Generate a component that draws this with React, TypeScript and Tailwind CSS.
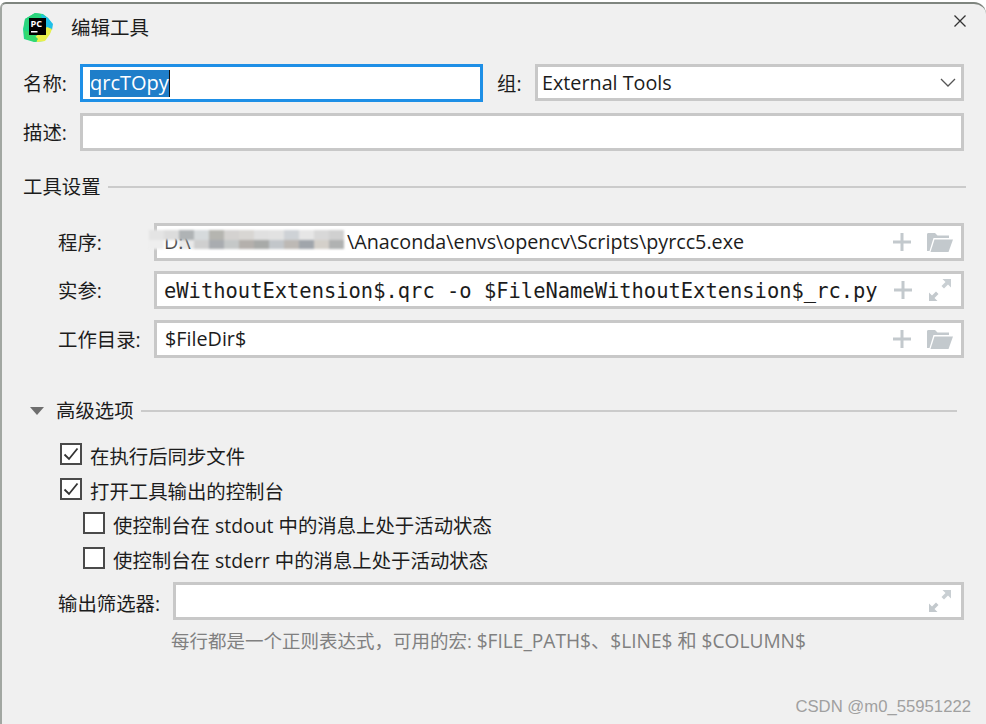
import React from "react";

const ui = "font-['Open_Sans','Noto_Sans_CJK_SC',sans-serif]";
const box = "flex items-center border-[3px] border-[#c8c8c8] bg-white";
const labelText = "text-[19.4px] leading-[26px] text-[#1c1c1c]";

function Plus() {
  return (
    <svg width="18" height="18" viewBox="0 0 18 18" className="shrink-0">
      <path d="M7.5 0h3v7.5H18v3h-7.5V18h-3v-7.5H0v-3h7.5z" fill="#c3c9cd" />
    </svg>
  );
}

function Folder() {
  return (
    <svg width="26" height="20" viewBox="0 0 26 20" className="shrink-0">
      <path d="M0 2.5C0 1.5.6 1 1.5 1h6.5l2.5 2.5H22v2.5H6.5L2.5 19H0z" fill="#c3c9cd" />
      <path d="M7.5 7.5H26L21.5 20H3.5z" fill="#c3c9cd" />
    </svg>
  );
}

function Expand() {
  return (
    <svg width="22" height="22" viewBox="0 0 22 22" className="shrink-0">
      <path d="M13.5 0H22v8.5l-3-3-4 4-2.5-2.5 4-4z" fill="#c9cfd3" />
      <path d="M0 22v-8.5l3 3 4-4 2.5 2.5-4 4 3 3z" fill="#c3c9cd" />
    </svg>
  );
}

function Logo() {
  return (
    <svg width="30" height="29" viewBox="0 0 30 29" className="shrink-0">
      <path d="M2 6 12 0l8 1 5 4 4 6-2 9-6 8-10 1-10-3-1-10z" fill="#21d789" />
      <path d="M2 6 12 0l6 1-6 8-11 6z" fill="#2bd47c" />
      <path d="M18 1l7 4 5 6-1 6-8-3z" fill="#1fbfe8" />
      <path d="M24 14l5 2-2 5-5 7-8 1-2-5z" fill="#e9f04a" />
      <path d="M1 17l8 3 6 6-2 3-10-3z" fill="#35d96c" />
      <rect x="6" y="5" width="17" height="17" fill="#000" />
      <text x="7.6" y="13.6" fontSize="9.2" fontWeight="700" fill="#fff" fontFamily="'Open Sans',sans-serif">
        PC
      </text>
      <rect x="8" y="18" width="6.5" height="1.5" fill="#fff" />
    </svg>
  );
}

function Check({ on }: { on: boolean }) {
  return (
    <span className="flex h-[22px] w-[22px] shrink-0 items-center justify-center border-2 border-[#4a4a4a] bg-white">
      {on && (
        <svg width="16" height="14" viewBox="0 0 16 14">
          <path d="M1.5 7.5 6 12 14.5 1.5" fill="none" stroke="#333" strokeWidth="1.8" />
        </svg>
      )}
    </span>
  );
}

function Section({ title, pad, lead }: { title: string; pad?: string; lead?: React.ReactNode }) {
  return (
    <div className={`flex items-center ${pad ?? ""}`}>
      {lead}
      <span className={labelText}>{title}</span>
      <span className="ml-[7px] h-[2px] flex-1 bg-[#cbcbcb]" />
    </div>
  );
}

function Row({ label, children, top, right }: { label: string; children: React.ReactNode; top: string; right: string }) {
  return (
    <div className={`flex items-center pl-[56px] ${top}`}>
      <span className={`w-[96px] shrink-0 pt-[2px] ${labelText}`}>{label}</span>
      <div className={`${box} h-[38px] min-w-0 flex-1 pl-[7px] ${right}`}>{children}</div>
    </div>
  );
}

function Opt({ on, children, indent, top }: { on: boolean; children: React.ReactNode; indent: string; top: string }) {
  return (
    <div className={`flex h-[22px] items-center gap-[8px] ${indent} ${top}`}>
      <Check on={on} />
      <span className={`whitespace-pre pt-[6px] ${labelText}`}>{children}</span>
    </div>
  );
}

const mosaicCells = [
  "#e4e4e4", "#dcdcdc", "#afb3b5", "#d6dadc", "#b5b5b0", "#d4d2d0", "#d8d6d3", "#e0e0e0", "#e2e2e2", "#ced2d6", "#e6e6e6", "#d8d8d8", "#d0d0d0",
  "#eeeeee", "#f6f6f644", "#c8c8c866", "#cfcfcf", "#a9acb0", "#c5c8c8", "#b4b0ac", "#a8aaa8", "#c2c6ca", "#bdb9b5", "#a0a5ab", "#d4d0ca", "#b0b2b2",
];

function Mosaic() {
  return (
    <span className="absolute -left-[15px] top-[1px] grid h-[19px] w-[195px] grid-cols-[repeat(13,15px)] grid-rows-2 blur-[1px]">
      {mosaicCells.map((c, i) => (
        <span key={i} style={{ backgroundColor: c }} />
      ))}
    </span>
  );
}

const field = "text-[19.75px] leading-[26px] text-[#1c1c1c]";

export default function App() {
  return (
    <div className={`h-[724px] w-[986px] overflow-hidden bg-white pt-[2px] ${ui}`}>
      <div className="h-[722px] rounded-tl-[6px] rounded-tr-[12px] border-l-2 border-t-2 border-l-[#a2a7a2] border-t-[#7f857f] bg-[#f0f0f0] pr-[22px]">
        <div className="flex h-[60px] items-center pb-[13px] pl-[21px]">
          <span className="flex h-[29px] w-[48px] items-center">
            <Logo />
          </span>
          <span className="text-[19.5px] leading-[26px] text-[#1c1c1c]">编辑工具</span>
          <svg width="12" height="12" viewBox="0 0 12 12" className="-mr-[2px] mt-[11px] ml-auto self-start">
            <path d="M.5.5l11 11M11.5.5l-11 11" stroke="#333" strokeWidth="1.3" fill="none" />
          </svg>
        </div>

        <div className="flex items-center pl-[21px]">
          <span className={`w-[57px] shrink-0 pt-[2px] ${labelText}`}>名称:</span>
          <div className="flex h-[38px] w-[403px] items-center border-[3px] border-[#1e8fe6] bg-white pl-[7px]">
            <span className="flex h-[27px] items-center border-r border-[#111] bg-[#1f7ec9] text-[20px] leading-none text-white">
              qrcTOpy
            </span>
          </div>
          <span className={`ml-[14px] w-[38px] shrink-0 pt-[2px] ${labelText}`}>组:</span>
          <div className={`${box} -mt-[1px] h-[37px] flex-1 pl-[4px] pr-[5px]`}>
            <span className={field}>External Tools</span>
            <svg width="16" height="9" viewBox="0 0 16 9" className="ml-auto">
              <path d="M1 1l7 7 7-7" fill="none" stroke="#555" strokeWidth="1.3" />
            </svg>
          </div>
        </div>

        <div className="mt-[11px] flex items-center pl-[21px]">
          <span className={`w-[57px] shrink-0 pt-[2px] ${labelText}`}>描述:</span>
          <div className={`${box} h-[38px] flex-1`} />
        </div>

        <div className="-mr-[2px] mt-[21px] pl-[21px]">
          <Section title="工具设置" pad="pt-[2px]" />
        </div>

        <Row label="程序:" top="mt-[23px]" right="pr-[8px]">
          <span className={`relative block w-[183px] shrink-0 whitespace-pre ${field}`}>
            {"D:\\"}
            <Mosaic />
          </span>
          <span className={`whitespace-nowrap ${field}`}>\Anaconda\envs\opencv\Scripts\pyrcc5.exe</span>
          <span className="ml-auto flex items-center gap-[16px]">
            <Plus />
            <Folder />
          </span>
        </Row>
        <Row label="实参:" top="mt-[10px]" right="pr-[10px]">
          <span className="whitespace-nowrap pt-[1px] font-['DejaVu_Sans_Mono',monospace] text-[20.46px] leading-[28px] text-[#1c1c1c]">
            eWithoutExtension$.qrc -o $FileNameWithoutExtension$_rc.py
          </span>
          <span className="ml-auto flex items-center gap-[17px]">
            <Plus />
            <Expand />
          </span>
        </Row>
        <Row label="工作目录:" top="mt-[11px]" right="pr-[8px]">
          <span className={`ml-[1px] ${field}`}>$FileDir$</span>
          <span className="ml-auto flex items-center gap-[16px]">
            <Plus />
            <Folder />
          </span>
        </Row>

        <div className="-mr-[-7px] mt-[40px] pl-[28px]">
          <Section
            title="高级选项"
            lead={<span className="mr-[12px] h-0 w-0 border-x-[7px] border-t-[8px] border-x-transparent border-t-[#6e6e6e]" />}
          />
        </div>

        <Opt on top="mt-[19px]" indent="pl-[58px]">
          在执行后同步文件
        </Opt>
        <Opt on top="mt-[13px]" indent="pl-[58px]">
          打开工具输出的控制台
        </Opt>
        <Opt on={false} top="mt-[12px]" indent="pl-[81px]">
          使控制台在 stdout 中的消息上处于活动状态
        </Opt>
        <Opt on={false} top="mt-[13px]" indent="pl-[81px]">
          使控制台在 stderr 中的消息上处于活动状态
        </Opt>

        <div className="mt-[13px] flex items-center pl-[56px]">
          <span className={`w-[115px] shrink-0 pt-[6px] ${labelText}`}>输出筛选器:</span>
          <div className={`${box} h-[38px] flex-1 justify-end pr-[10px]`}>
            <Expand />
          </div>
        </div>
        <p className="mt-[8px] pl-[169px] text-[18.5px] leading-[26px] text-[#808080]">
          每行都是一个正则表达式，可用的宏: <span className="text-[19.15px]">$FILE_PATH$、$LINE$ 和 $COLUMN$</span>
        </p>
        <p className="-mr-[7px] mt-[43px] text-right font-['Liberation_Sans',sans-serif] text-[16.7px] leading-[20px] text-[#a0a0a0]">
          CSDN @m0_55951222
        </p>
      </div>
    </div>
  );
}
